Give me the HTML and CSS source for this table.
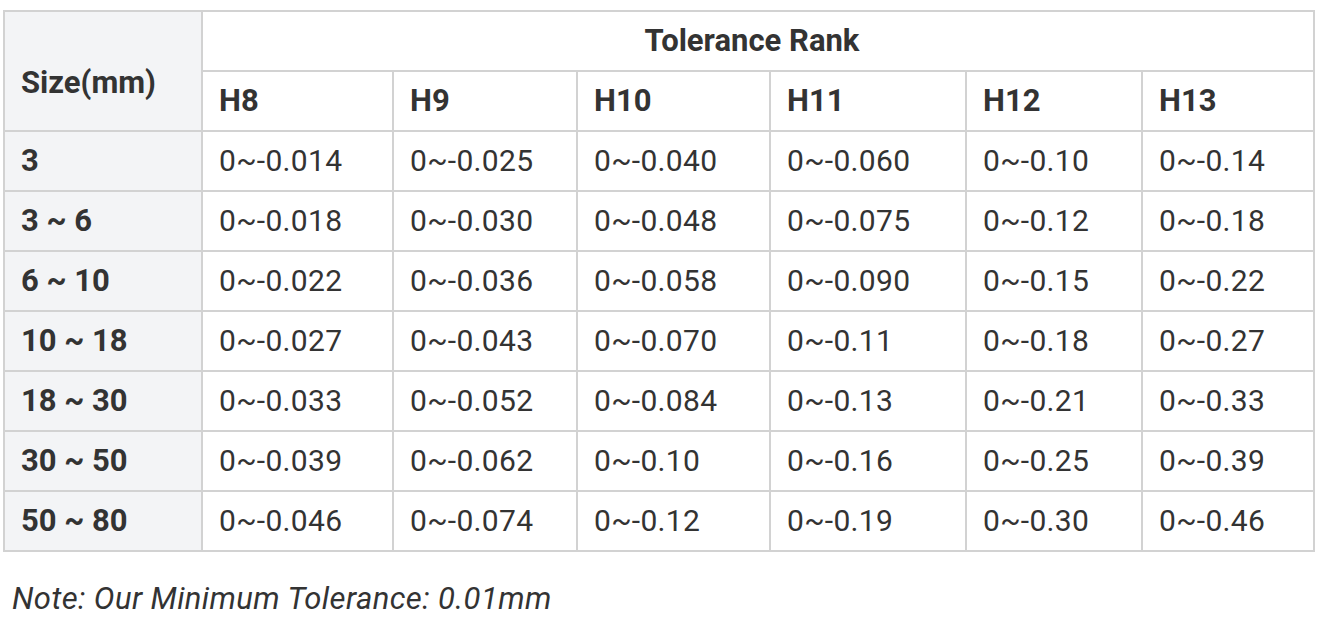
FILE: index.html
```html
<!DOCTYPE html>
<html>
<head>
<meta charset="utf-8">
<link rel="stylesheet" href="styles.css">
</head>
<body>
<div class="wrap">
<table class="tol">
<colgroup>
<col class="c0"><col class="c1"><col class="c2"><col class="c3"><col class="c4"><col class="c5"><col class="c6">
</colgroup>
<thead>
<tr><th class="side size" rowspan="2">Size(mm)</th><th class="rank" colspan="6">Tolerance Rank</th></tr>
<tr><th>H8</th><th>H9</th><th>H10</th><th>H11</th><th>H12</th><th>H13</th></tr>
</thead>
<tbody>
<tr><th class="side">3</th><td>0~-0.014</td><td>0~-0.025</td><td>0~-0.040</td><td>0~-0.060</td><td>0~-0.10</td><td>0~-0.14</td></tr>
<tr><th class="side">3 ~ 6</th><td>0~-0.018</td><td>0~-0.030</td><td>0~-0.048</td><td>0~-0.075</td><td>0~-0.12</td><td>0~-0.18</td></tr>
<tr><th class="side">6 ~ 10</th><td>0~-0.022</td><td>0~-0.036</td><td>0~-0.058</td><td>0~-0.090</td><td>0~-0.15</td><td>0~-0.22</td></tr>
<tr><th class="side">10 ~ 18</th><td>0~-0.027</td><td>0~-0.043</td><td>0~-0.070</td><td>0~-0.11</td><td>0~-0.18</td><td>0~-0.27</td></tr>
<tr><th class="side">18 ~ 30</th><td>0~-0.033</td><td>0~-0.052</td><td>0~-0.084</td><td>0~-0.13</td><td>0~-0.21</td><td>0~-0.33</td></tr>
<tr><th class="side">30 ~ 50</th><td>0~-0.039</td><td>0~-0.062</td><td>0~-0.10</td><td>0~-0.16</td><td>0~-0.25</td><td>0~-0.39</td></tr>
<tr><th class="side">50 ~ 80</th><td>0~-0.046</td><td>0~-0.074</td><td>0~-0.12</td><td>0~-0.19</td><td>0~-0.30</td><td>0~-0.46</td></tr>
</tbody>
</table>
<p class="note">Note: Our Minimum Tolerance: 0.01mm</p>
</div>
</body>
</html>
```
FILE: styles.css
```css
html, body {
  margin: 0;
  padding: 0;
  background: #ffffff;
}
body {
  font-family: Roboto, "Liberation Sans", sans-serif;
  color: #333333;
}
.wrap {
  padding: 10px 0 0 3px;
}
.tol {
  border-collapse: collapse;
  table-layout: fixed;
  width: 1310px;
}
.c0 { width: 198px; }
.c1 { width: 191px; }
.c2 { width: 184px; }
.c3 { width: 193px; }
.c4 { width: 196px; }
.c5 { width: 176px; }
.c6 { width: 172px; }
.tol th, .tol td {
  border: 2px solid #d2d2d2;
  height: 60px;
  padding: 0 0 0 16px;
  text-align: left;
  vertical-align: middle;
  box-sizing: border-box;
  line-height: 34px;
  white-space: nowrap;
}
.tol th {
  font-weight: 700;
  font-size: 31px;
}
.tol td {
  font-weight: 400;
  font-size: 30px;
  letter-spacing: 0.3px;
}
.tol .side {
  background: #f3f4f6;
}
.tol .size {
  padding-top: 24px;
}
.tol .rank {
  text-align: center;
  padding: 0 12px 0 0;
}
.note {
  margin: 28px 0 0 9px;
  font-size: 31px;
  letter-spacing: 0.4px;
  font-style: italic;
  color: #333333;
}
```
